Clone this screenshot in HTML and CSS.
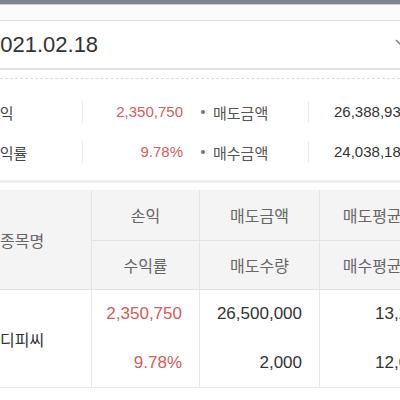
FILE: index.html
```html
<!DOCTYPE html>
<html lang="ko">
<head>
<meta charset="utf-8">
<link rel="stylesheet" href="styles.css">
</head>
<body>
<div class="topbar"></div>
<div class="strip"></div>
<div class="datebox">
  <span class="date">2021.02.18</span>
  <svg class="chev" width="14" height="8" viewBox="0 0 14 8"><path d="M1 1 L7 7 L13 1" fill="none" stroke="#8c8c8c" stroke-width="1.6"/></svg>
</div>
<div class="dash"></div>
<div class="summary">
  <div class="srow">
    <div class="slabel">손익</div>
    <div class="sval red">2,350,750</div>
    <div class="sname"><i class="dot"></i>매도금액</div>
    <div class="sval2">26,388,930</div>
  </div>
  <div class="srow">
    <div class="slabel">수익률</div>
    <div class="sval red">9.78%</div>
    <div class="sname"><i class="dot"></i>매수금액</div>
    <div class="sval2">24,038,180</div>
  </div>
</div>
<div class="band"></div>
<div class="table">
  <div class="th name">종목명</div>
  <div class="th">손익</div>
  <div class="th">매도금액</div>
  <div class="th">매도평균가</div>
  <div class="th">수익률</div>
  <div class="th">매도수량</div>
  <div class="th">매수평균가</div>
  <div class="td name">디피씨</div>
  <div class="td"><span class="line red">2,350,750</span><span class="line red">9.78%</span></div>
  <div class="td"><span class="line">26,500,000</span><span class="line">2,000</span></div>
  <div class="td left"><span class="line">13,250</span><span class="line">12,019</span></div>
</div>
</body>
</html>
```
FILE: styles.css
```css
* { box-sizing: border-box; margin: 0; padding: 0; }
body {
  margin: 0;
  width: 400px;
  height: 400px;
  overflow: hidden;
  background: #fff;
  font-family: "Liberation Sans", "Noto Sans CJK KR", sans-serif;
  color: #333;
}
.topbar { height: 4px; background: #7f8492; }
.strip { height: 16px; background: #fbfbfb; border-top: 1px solid #c9ccd3; }
.datebox {
  width: 412px;
  height: 50px;
  display: flex;
  align-items: center;
  justify-content: space-between;
  border-top: 1px solid #dedede;
  border-bottom: 2px solid #e2e2e2;
  padding-right: 3px;
}
.date { font-size: 22px; margin-left: -12px; color: #333; }
.chev { margin-top: -4px; }
.dash { height: 9px; border-bottom: 1px dashed #dcdcdc; }
.summary { padding: 13px 0 8px; }
.srow {
  display: grid;
  grid-template-columns: 82px 113px 113px 1fr;
  height: 40px;
  align-items: center;
  font-size: 15px;
  width: 440px;
}
.slabel { margin-left: -14px; color: #444; }
.sval {
  border-left: 1px solid #ececec;
  height: 22px;
  line-height: 22px;
  text-align: right;
  padding-right: 12px;
}
.red { color: #d45b5b; }
.sname { display: flex; align-items: center; color: #555; }
.dot {
  width: 4px;
  height: 4px;
  border-radius: 50%;
  background: #777;
  margin-left: 6px;
  margin-right: 8px;
}
.sval2 {
  border-left: 1px solid #ececec;
  height: 22px;
  line-height: 22px;
  padding-left: 25px;
  white-space: nowrap;
}
.band { height: 3px; background: #efefef; margin-bottom: 7px; }
.table {
  display: grid;
  grid-template-columns: 92px 108px 120px 120px;
  grid-template-rows: 51px 49px 98px;
  width: 440px;
}
.th {
  background: #f4f4f4;
  border-right: 1px solid #e3e3e3;
  border-bottom: 1px solid #e3e3e3;
  display: flex;
  align-items: center;
  justify-content: center;
  color: #666;
  font-size: 16px;
}
.th.name { grid-row: span 2; justify-content: flex-start; }
.td {
  border-right: 1px solid #e8e8e8;
  border-bottom: 1px solid #e8e8e8;
  display: flex;
  flex-direction: column;
  font-size: 17px;
}
.td.name { justify-content: center; font-size: 16px; }
.line {
  height: 49px;
  display: flex;
  align-items: center;
  justify-content: flex-end;
  padding-right: 17px;
}
.td.left .line { justify-content: flex-start; padding-left: 55px; }
```
